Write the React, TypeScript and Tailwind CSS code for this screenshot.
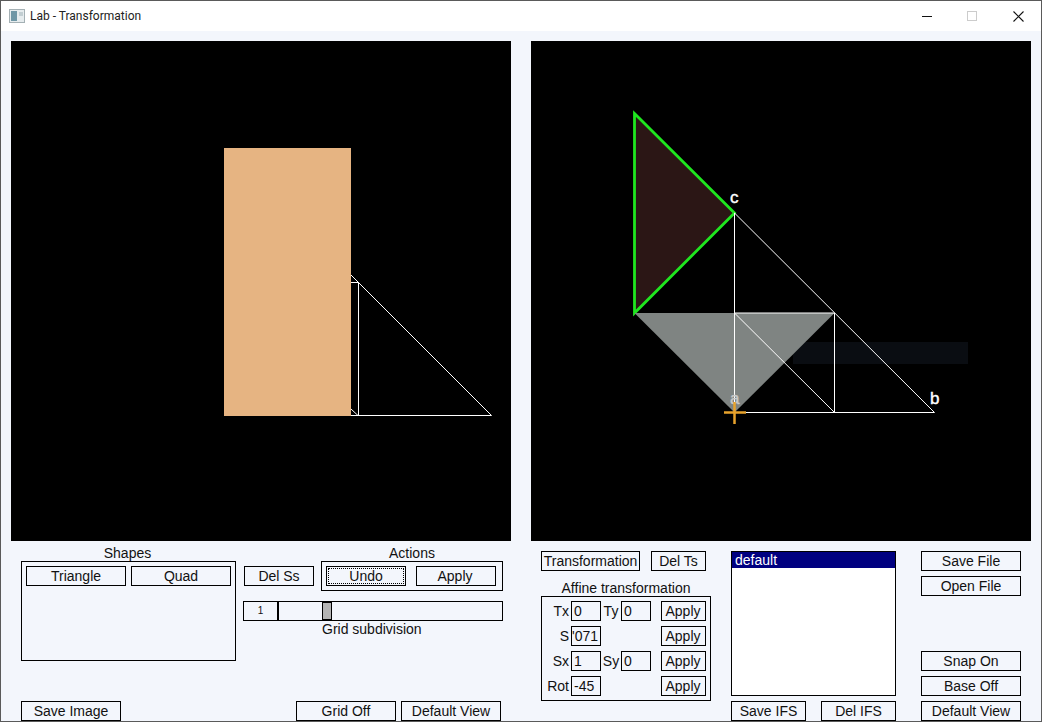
const arial = "font-['Liberation_Sans',Arial,sans-serif]"

type BtnProps = {
  label: string
  className?: string
}

const Btn = ({ label, className = "" }: BtnProps) => {
  return (
    <div
      className={`flex h-5 shrink-0 items-center justify-center whitespace-nowrap border border-black text-[14px] leading-none text-[#111] ${className}`}
    >
      {label}
    </div>
  )
}

const Field = ({ value, right = false }: { value: string; right?: boolean }) => {
  return (
    <div
      className={`flex h-5 w-[30px] shrink-0 items-center overflow-hidden whitespace-nowrap border border-black px-[1px] text-[14px] leading-none text-[#111] ${
        right ? "justify-end pr-[2px]" : "pl-[2px]"
      }`}
    >
      {value}
    </div>
  )
}

const AffineRow = ({
  label,
  value,
  second,
  right,
}: {
  label: string
  value: string
  second?: { label: string; value: string }
  right?: boolean
}) => {
  return (
    <div className="flex h-5 items-center">
      <div className="w-[27px] shrink-0 text-right text-[14px] leading-none whitespace-nowrap text-[#111]">{label}</div>
      <div className="ml-[2px]">
        <Field value={value} right={right} />
      </div>
      {second ? (
        <div className="flex items-center">
          <div className="w-[20px] shrink-0 text-center text-[14px] leading-none text-[#111]">{second.label}</div>
          <Field value={second.value} />
        </div>
      ) : (
        <div className="w-[50px] shrink-0" />
      )}
      <Btn label="Apply" className="ml-[10px] w-[45px] pr-px" />
    </div>
  )
}

const LeftDrawing = () => {
  return (
    <svg width="500" height="500" viewBox="11 41 500 500" className="block bg-black">
      <rect x="224" y="148" width="127" height="268" fill="#e6b482" />
      <g fill="none" stroke="#fff" strokeWidth="1">
        <path d="M351 275 L491.5 415.5 L351 415.5" />
        <path d="M351 282.5 H358.5 V415.5" />
        <path d="M351 409 L358 415.5" />
      </g>
    </svg>
  )
}

const RightDrawing = () => {
  return (
    <svg width="500" height="500" viewBox="531 41 500 500" className="block bg-black">
      <rect x="793" y="342" width="175" height="22" fill="#0a0d12" />
      <path d="M634.5 113.5 L734.5 213 L634.5 313 Z" fill="#2b1615" stroke="#1fe61f" strokeWidth="2.8" />
      <path d="M634.5 313 H834.5 L734.5 412.5 Z" fill="#7f8482" />
      <g fill="none" stroke="#fff" strokeWidth="1">
        <path d="M734.5 213 L934.5 412.5 H734.5 V213" />
        <path d="M734.5 313 H834.5 V412.5" />
        <path d="M734.5 313 L834.5 412.5" />
      </g>
      <g fontFamily="'Liberation Sans', Arial, sans-serif" fontSize="17" strokeWidth="0.4">
        <text x="730" y="203" fill="#fff" stroke="#fff">c</text>
        <text x="930" y="404" fill="#fff" stroke="#fff">b</text>
        <text x="730" y="404" fill="#c9c9c9" stroke="#c9c9c9">a</text>
      </g>
      <path d="M724 412.5 H746 M734.5 402 V424" stroke="#e8a32c" strokeWidth="2.5" />
    </svg>
  )
}

const TitleBar = () => {
  return (
    <div className="flex h-[30px] shrink-0 items-center bg-white pr-[17px]">
      <svg width="16" height="14" viewBox="0 0 16 14" className="ml-[8px] shrink-0">
        <rect x="0.5" y="0.5" width="15" height="13" fill="#e6ecee" stroke="#a4b0b4" />
        <rect x="2" y="2" width="6" height="10" fill="#6f97a6" />
        <rect x="10" y="3" width="4" height="4" fill="#c2ced2" />
      </svg>
      <div className="ml-[5px] font-['Roboto',sans-serif] text-[12px] leading-none text-[#222]">Lab - Transformation</div>
      <svg width="10" height="1" viewBox="0 0 10 1" className="ml-auto shrink-0">
        <rect width="10" height="1" fill="#111" />
      </svg>
      <svg width="10" height="10" viewBox="0 0 10 10" className="ml-[35px] shrink-0">
        <rect x="0.5" y="0.5" width="9" height="9" fill="none" stroke="#ccc" />
      </svg>
      <svg width="11" height="11" viewBox="0 0 11 11" className="ml-[36px] shrink-0">
        <path d="M0.5 0.5 L10.5 10.5 M10.5 0.5 L0.5 10.5" stroke="#111" strokeWidth="1.1" />
      </svg>
    </div>
  )
}

const LeftControls = () => {
  return (
    <div className="flex h-[180px] w-[500px] flex-col">
      <div className="flex pl-[10px]">
        <div className="w-[215px] shrink-0">
          <div className="h-5 pt-[5px] pr-[2px] text-center text-[14px] leading-[14px] text-[#111]">Shapes</div>
          <div className="flex h-[100px] gap-[5px] border border-black p-1">
            <Btn label="Triangle" className="w-[100px]" />
            <Btn label="Quad" className="w-[100px]" />
          </div>
        </div>
        <div className="ml-[7px] w-[260px] shrink-0">
          <div className="flex">
            <Btn label="Del Ss" className="ml-px mt-[25px] w-[70px]" />
            <div className="ml-[7px] w-[182px]">
              <div className="h-5 pt-[5px] text-center text-[14px] leading-[14px] text-[#111]">Actions</div>
              <div className="flex h-[30px] border border-black p-1">
                <div className="h-5 w-[80px] shrink-0 border border-black p-px">
                  <div className="flex h-full items-center justify-center border border-dotted border-black text-[14px] leading-none text-[#111]">
                    Undo
                  </div>
                </div>
                <Btn label="Apply" className="ml-[10px] w-[80px] pr-[2px]" />
              </div>
            </div>
          </div>
          <div className="mt-[10px] flex h-5 items-center border border-black">
            <div className="w-[33px] shrink-0 text-center text-[10px] leading-none text-[#111]">1</div>
            <div className="h-full w-[2px] shrink-0 bg-black" />
            <div className="ml-[43px] h-full w-[10px] shrink-0 border border-black bg-[#b4b4b4]" />
          </div>
          <div className="pl-[79px] text-[14px] leading-[16px] whitespace-nowrap text-[#111]">Grid subdivision</div>
        </div>
      </div>
      <div className="mt-auto flex pl-[10px]">
        <Btn label="Save Image" className="w-[100px]" />
        <Btn label="Grid Off" className="ml-[175px] w-[100px]" />
        <Btn label="Default View" className="ml-[5px] w-[100px]" />
      </div>
    </div>
  )
}

const RightControls = () => {
  return (
    <div className="flex h-[180px] w-[500px] pt-[10px] pl-[10px]">
      <div className="w-[170px] shrink-0">
        <div className="flex">
          <Btn label="Transformation" className="w-[99px]" />
          <Btn label="Del Ts" className="ml-[11px] w-[55px]" />
        </div>
        <div className="mt-[5px] h-5 pt-[5px] text-center text-[14px] leading-[14px] whitespace-nowrap text-[#111]">Affine transformation</div>
        <div className="flex h-[105px] w-[170px] flex-col gap-[5px] border border-black pt-1">
          <AffineRow label="Tx" value="0" second={{ label: "Ty", value: "0" }} />
          <AffineRow label="S" value="'071" right />
          <AffineRow label="Sx" value="1" second={{ label: "Sy", value: "0" }} />
          <AffineRow label="Rot" value="-45" />
        </div>
      </div>
      <div className="ml-[20px] flex w-[165px] shrink-0 flex-col">
        <div className="h-[145px] border border-black bg-white">
          <div className="h-[16px] bg-[#000080] pl-[3px] text-[14px] leading-[16px] text-white">default</div>
        </div>
        <div className="mt-[5px] flex justify-between">
          <Btn label="Save IFS" className="w-[75px]" />
          <Btn label="Del IFS" className="w-[75px]" />
        </div>
      </div>
      <div className="ml-[25px] flex w-[100px] shrink-0 flex-col gap-[5px]">
        <Btn label="Save File" />
        <Btn label="Open File" />
        <div className="h-[45px] shrink-0" />
        <Btn label="Snap On" />
        <Btn label="Base Off" />
        <Btn label="Default View" />
      </div>
    </div>
  )
}

const App = () => {
  return (
    <div className={`h-[722px] w-[1042px] overflow-hidden bg-white ${arial}`}>
      <div className="flex h-full flex-col border border-[#5a5a5a]">
        <TitleBar />
        <div className="flex-1 bg-[#f3f6fc] pt-[10px] pl-[10px]">
          <div className="flex gap-5">
            <LeftDrawing />
            <RightDrawing />
          </div>
          <div className="flex gap-5">
            <LeftControls />
            <RightControls />
          </div>
        </div>
      </div>
    </div>
  )
}

export default App
